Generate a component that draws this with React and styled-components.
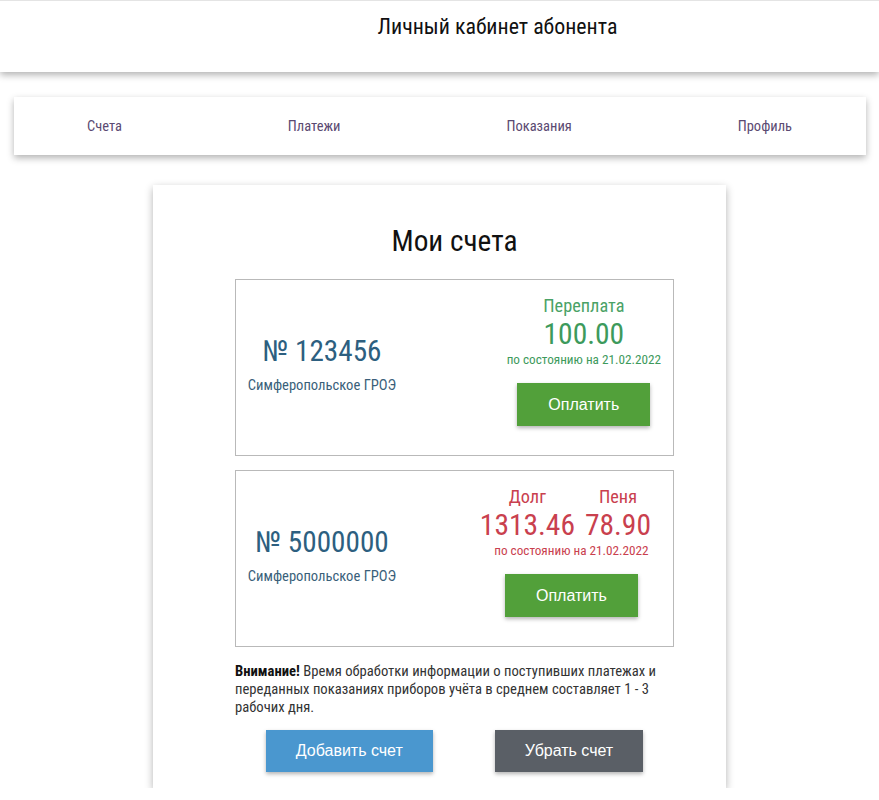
import React from "react";
import styled, { createGlobalStyle } from "styled-components";

const Global = createGlobalStyle`
  html, body { margin: 0; padding: 0; background: #ffffff; }
  body { font-family: "Roboto", "Liberation Sans", sans-serif; font-stretch: 75%; color: #222; }
  * { box-sizing: border-box; }
`;

const Header = styled.header`
  height: 72px;
  background: #fff;
  border-top: 1px solid #e4e4e4;
  box-shadow: 0 3px 7px rgba(0, 0, 0, 0.3);
  display: flex;
  justify-content: center;
  padding: 14px 0 0 116px;
`;

const Title = styled.h1`
  margin: 0;
  font-size: 21.9px;
  line-height: 24px;
  font-weight: 400;
  color: #111;
`;

const Nav = styled.nav`
  margin: 25px 13px 0 14px;
  height: 58px;
  background: #fff;
  box-shadow: 0 3px 7px rgba(0, 0, 0, 0.3);
  display: flex;
  align-items: center;
  justify-content: space-between;
  padding: 0 74px 0 73px;
`;

const NavItem = styled.a`
  font-size: 14.5px;
  color: #5b4a72;
  text-decoration: none;
`;

const Card = styled.main`
  width: 573px;
  margin: 30px auto 0;
  background: #fff;
  box-shadow: 0 3px 8px rgba(0, 0, 0, 0.3);
  padding: 40px 52px 16px 82px;
`;

const Heading = styled.h2`
  margin: 0 0 22px;
  text-align: center;
  font-size: 29.3px;
  line-height: 32px;
  font-weight: 400;
  color: #111;
`;

const AccountList = styled.div`
  display: flex;
  flex-direction: column;
  gap: 14px;
`;

const AccountBox = styled.section`
  height: 177px;
  border: 1px solid #b9b9b9;
  display: flex;
  align-items: center;
`;

const LeftCol = styled.div`
  width: 172px;
  text-align: center;
  margin-bottom: 6px;
`;

const Number = styled.div`
  font-size: 29.2px;
  line-height: 32px;
  color: #2d5f80;
`;

const Org = styled.div`
  margin-top: 9px;
  font-size: 14.6px;
  line-height: 18px;
  color: #3a5f7a;
`;

const RightCol = styled.div`
  margin-left: auto;
  margin-right: ${(p) => p.$inset}px;
  margin-bottom: 13px;
  display: flex;
  flex-direction: column;
  align-items: center;
`;

const Amounts = styled.div`
  display: flex;
  gap: 10px;
  margin-right: ${(p) => p.$offset || 0}px;
`;

const AmountCol = styled.div`
  display: flex;
  flex-direction: column;
  align-items: center;
  color: ${(p) => (p.$debt ? "#c9404e" : "#3d9a5c")};
`;

const Label = styled.div`
  font-size: 18.3px;
  line-height: 20px;
  color: ${(p) => (p.$debt ? "#c9404e" : "#4aa266")};
`;

const Value = styled.div`
  margin-top: 2px;
  font-size: 29.5px;
  line-height: 32px;
`;

const DateNote = styled.div`
  margin-top: 2px;
  font-size: 13.2px;
  line-height: 16px;
  color: ${(p) => (p.$debt ? "#c9404e" : "#3d9a5c")};
`;

const Button = styled.button`
  font-family: "Liberation Sans", Arial, sans-serif;
  font-stretch: normal;
  font-size: 16px;
  color: #fff;
  border: none;
  border-radius: 0;
  height: ${(p) => p.$h || 42}px;
  padding: 0 ${(p) => p.$px || 30}px;
  background: ${(p) => p.$bg};
  box-shadow: 0 2px 4px rgba(0, 0, 0, 0.3);
  cursor: pointer;
`;

const PayButton = styled(Button)`
  margin-top: 15px;
`;

const Notice = styled.p`
  margin: 15px 0 0;
  font-size: 14.65px;
  line-height: 18px;
  color: #333;
  b { color: #111; }
`;

const Actions = styled.div`
  display: flex;
  justify-content: center;
  gap: 62px;
  margin-top: 14px;
`;

export default function App() {
  return (
    <>
      <Global />
      <Header>
        <Title>Личный кабинет абонента</Title>
      </Header>
      <Nav>
        <NavItem href="#">Счета</NavItem>
        <NavItem href="#">Платежи</NavItem>
        <NavItem href="#">Показания</NavItem>
        <NavItem href="#">Профиль</NavItem>
      </Nav>
      <Card>
        <Heading>Мои счета</Heading>
        <AccountList>
          <AccountBox>
            <LeftCol>
              <Number>№ 123456</Number>
              <Org>Симферопольское ГРОЭ</Org>
            </LeftCol>
            <RightCol $inset={12}>
              <Amounts>
                <AmountCol>
                  <Label>Переплата</Label>
                  <Value>100.00</Value>
                </AmountCol>
              </Amounts>
              <DateNote>по состоянию на 21.02.2022</DateNote>
              <PayButton $bg="#52a03a" $h={43} $px={31}>Оплатить</PayButton>
            </RightCol>
          </AccountBox>
          <AccountBox>
            <LeftCol>
              <Number>№ 5000000</Number>
              <Org>Симферопольское ГРОЭ</Org>
            </LeftCol>
            <RightCol $inset={10}>
              <Amounts $offset={12}>
                <AmountCol $debt>
                  <Label $debt>Долг</Label>
                  <Value>1313.46</Value>
                </AmountCol>
                <AmountCol $debt>
                  <Label $debt>Пеня</Label>
                  <Value>78.90</Value>
                </AmountCol>
              </Amounts>
              <DateNote $debt>по состоянию на 21.02.2022</DateNote>
              <PayButton $bg="#52a03a" $h={43} $px={31}>Оплатить</PayButton>
            </RightCol>
          </AccountBox>
        </AccountList>
        <Notice>
          <b>Внимание!</b> Время обработки информации о поступивших платежах и
          переданных показаниях приборов учёта в среднем составляет 1 - 3
          рабочих дня.
        </Notice>
        <Actions>
          <Button $bg="#4a97cf">Добавить счет</Button>
          <Button $bg="#5a5f66">Убрать счет</Button>
        </Actions>
      </Card>
    </>
  );
}
